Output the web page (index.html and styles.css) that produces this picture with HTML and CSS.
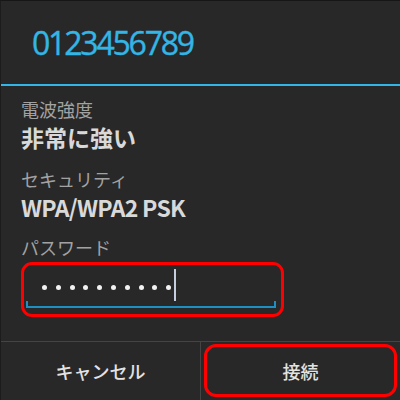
FILE: index.html
```html
<!DOCTYPE html>
<html lang="ja">
<head>
    <meta charset="UTF-8">
    <meta name="viewport" content="width=device-width, initial-scale=1.0">
    <title>Wi-Fi 接続</title>
    <link rel="stylesheet" href="styles.css">
</head>
<body>
    <div class="dialog">
        <div class="dialog-title">0123456789</div>

        <div class="dialog-body">
            <div class="label">電波強度</div>
            <div class="value">非常に強い</div>

            <div class="label label-gap">セキュリティ</div>
            <div class="value value-latin">WPA/WPA2 PSK</div>

            <div class="label label-gap-sm">パスワード</div>
            <div class="pw-box">
                <div class="pw-text">
                    <span class="dot"></span><span class="dot"></span><span class="dot"></span><span class="dot"></span><span class="dot"></span>
                    <span class="dot"></span><span class="dot"></span><span class="dot"></span><span class="dot"></span><span class="dot"></span>
                    <span class="cursor"></span>
                </div>
                <div class="pw-line"></div>
            </div>
        </div>

        <div class="dialog-buttons">
            <div class="btn">キャンセル</div>
            <div class="btn btn-marked"><span>接続</span></div>
        </div>
    </div>
</body>
</html>
```

FILE: styles.css
```css
/* Android style Wi-Fi connect dialog */

* {
    box-sizing: border-box;
}

body {
    margin: 0;
    background-color: #282828;
    font-family: "Noto Sans CJK JP", "Noto Sans", sans-serif;
}

.dialog {
    display: flex;
    flex-direction: column;
    width: 400px;
    height: 400px;
    overflow: hidden;
    background-color: #282828;
    border-top: 1px solid #161616;
    border-left: 1px solid #1c1c1c;
}

.dialog-title {
    display: flex;
    align-items: center;
    height: 85px;
    padding-left: 31px;
    color: #33b5e5;
    font-family: "Open Sans", "Noto Sans", sans-serif;
    font-size: 32px;
    letter-spacing: -2.2px;
    -webkit-text-stroke: 0.4px #33b5e5;
    border-bottom: 2px solid #33b5e5;
}

.dialog-body {
    flex: 1;
    padding: 13px 0 0 20px;
}

.label {
    color: #a2a2a2;
    font-size: 18px;
    line-height: 20px;
}

.label-gap {
    margin-top: 19px;
}

.label-gap-sm {
    margin-top: 17px;
}

.value {
    margin-top: 5px;
    color: #d9d9d9;
    font-size: 23px;
    font-weight: bold;
    line-height: 26px;
}

.value-latin {
    letter-spacing: -0.7px;
}

/* red marker round the password field */
.pw-box {
    width: 263px;
    height: 55px;
    margin-top: 5px;
    padding: 0 5px 0 2px;
    border: 3px solid #ff0000;
    border-radius: 11px;
}

.pw-text {
    display: flex;
    align-items: flex-start;
    gap: 8.8px;
    height: 36px;
    padding: 4px 0 0 16px;
}

.dot {
    width: 5px;
    height: 5px;
    margin-top: 15.5px;
    border-radius: 50%;
    background-color: #f2f2f2;
}

.cursor {
    width: 2px;
    height: 32px;
    margin-left: -6px;
    background-color: #c6cde0;
}

.pw-line {
    height: 7px;
    border: 2px solid #1d8fc2;
    border-top: 0;
}

.dialog-buttons {
    display: grid;
    grid-template-columns: 200px 1fr;
    height: 59px;
    border-top: 1px solid #444;
}

.btn {
    display: flex;
    align-items: center;
    justify-content: center;
    color: #e2e2e2;
    font-size: 18px;
    font-weight: 500;
}

.btn:first-child {
    border-right: 1px solid #444;
}

.btn-marked {
    margin: 2px 3px 3px 3px;
    border: 3px solid #ff0000;
    border-radius: 12px;
}
```
